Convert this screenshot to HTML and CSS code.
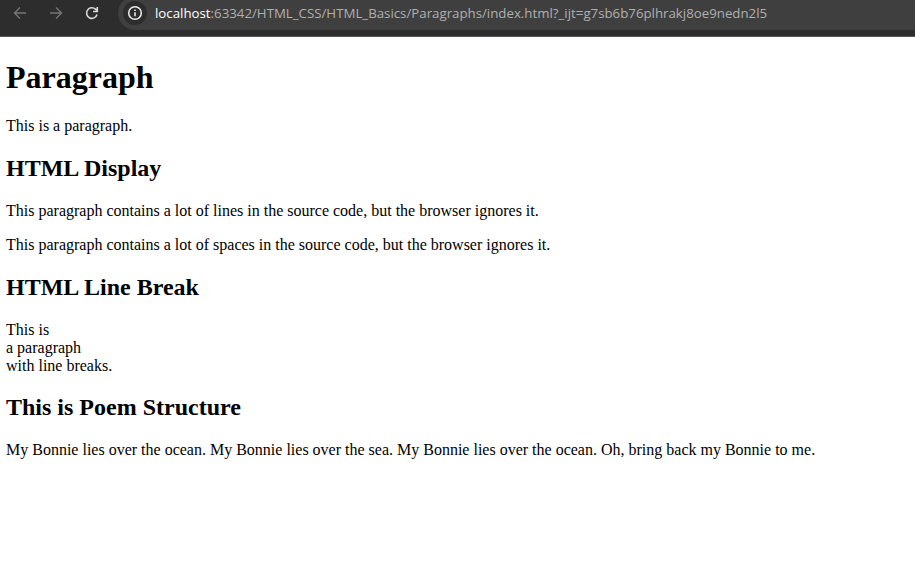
FILE: index.html
```html
<!DOCTYPE html>
<html lang="en">
<head>
<meta charset="utf-8">
<title>Paragraphs</title>
<link rel="stylesheet" href="styles.css">
</head>
<body>
<header class="toolbar">
  <svg class="icon dim" viewBox="0 0 16 16"><path d="M14 8H3M8 2.500L2.500 8L8 13.500"/></svg>
  <svg class="icon dim" viewBox="0 0 16 16"><path d="M2 8h11M8 2.500L13.500 8L8 13.500"/></svg>
  <svg class="icon reload" viewBox="0 0 16 16"><path d="M13 9.500a5.300 5.300 0 1 1-1.500-5.300L13.300 6M13.300 2v4.500H9"/></svg>
  <div class="address">
    <span class="info"><svg class="icon" viewBox="0 0 16 16"><circle cx="8" cy="8" r="6.300"/><path d="M8 7.300v4M8 4.500v1.500"/></svg></span>
    <span class="url"><span class="host">localhost</span>:63342/HTML_CSS/HTML_Basics/Paragraphs/index.html?_ijt=g7sb6b76plhrakj8oe9nedn2l5</span>
  </div>
</header>
<main class="page">
  <h1>Paragraph</h1>
  <p>This is a paragraph.</p>
  <h2>HTML Display</h2>
  <p>This paragraph contains a lot of lines in the source code, but the browser ignores it.</p>
  <p>This paragraph contains a lot of spaces in the source code, but the browser ignores it.</p>
  <h2>HTML Line Break</h2>
  <p>This is<br>a paragraph<br>with line breaks.</p>
  <h2 class="poem">This is Poem Structure</h2>
  <p>My Bonnie lies over the ocean. My Bonnie lies over the sea. My Bonnie lies over the ocean. Oh, bring back my Bonnie to me.</p>
</main>
</body>
</html>
```

FILE: styles.css
```css
body { margin: 0; background: #fff; color: #000; font-family: "Liberation Serif", serif; font-size: 16px; }
.toolbar { display: flex; align-items: flex-start; height: 37px; background: #2d2d2d; border-bottom: 1px solid #5a5a5a; overflow: hidden; padding-left: 12px; box-sizing: border-box; }
.icon { width: 16px; height: 16px; fill: none; stroke: #e8e8e8; stroke-width: 1.6; margin: 5px 20px 0 0; flex: none; }
.dim { stroke: #757575; stroke-width: 1.4; }
.reload { stroke: #d8d8d8; }
.address { display: flex; flex: 1; height: 34px; margin: -4px 0 0 -2px; background: #3f3f3f; border-radius: 17px 0 0 17px; }
.info { width: 24px; height: 24px; margin: 5px 0 0 5px; border-radius: 50%; background: #2d2d2d; }
.info .icon { display: block; margin: 4px; }
.url { margin: 4px 0 0 8px; color: #afafaf; font: 13.28px/27px "Open Sans", sans-serif; white-space: nowrap; }
.host { color: #fff; }
.page { padding: 0 6px; }
h1, h2, p { margin: 0; }
h1 { font-size: 32px; line-height: 36px; padding-top: 22px; }
h2 { font-size: 24px; line-height: 27px; margin-top: 20px; }
p { line-height: 18px; margin-top: 16px; }
h1 + p { margin-top: 22px; }
h2 + p { margin-top: 20px; }
.poem { margin-top: 19px; }
```
